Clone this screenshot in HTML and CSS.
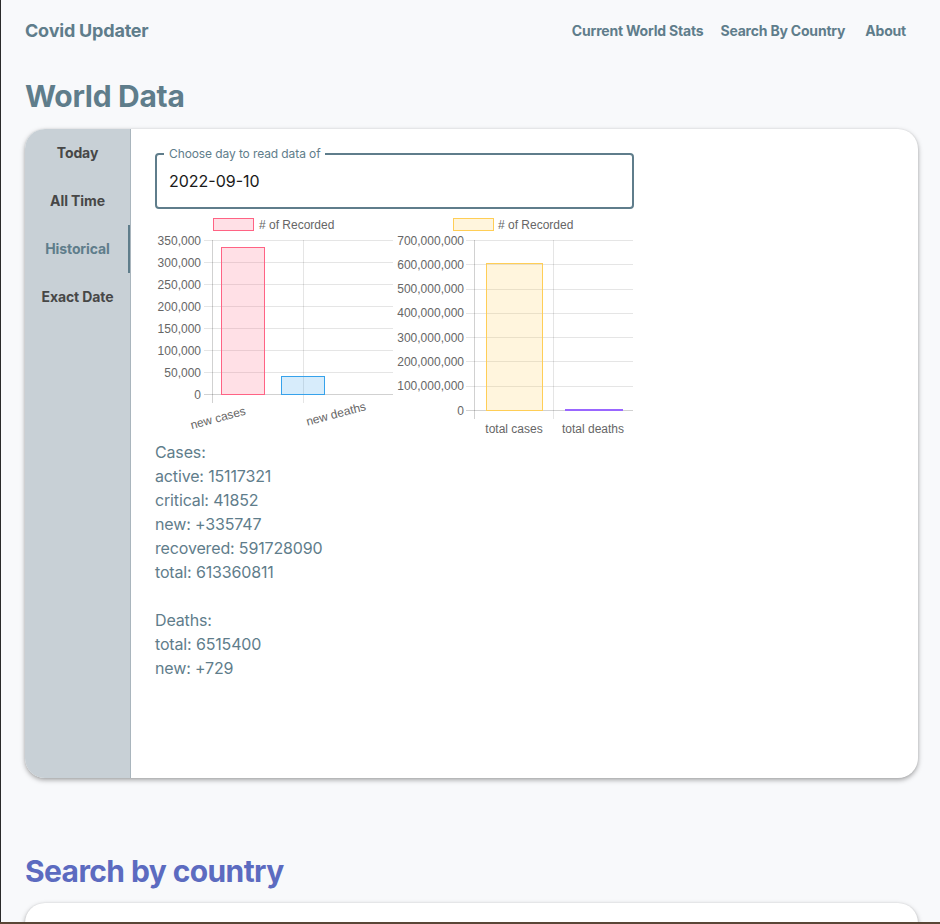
FILE: index.html
```html
<!DOCTYPE html>
<html lang="en">
<head>
<meta charset="utf-8">
<title>Covid Updater</title>
<link rel="stylesheet" href="styles.css">
</head>
<body>
<div class="page">
  <header class="topbar">
    <div class="brand">Covid Updater</div>
    <nav class="nav">
      <a href="#" class="nav-link">Current World Stats</a>
      <a href="#" class="nav-link">Search By Country</a>
      <a href="#" class="nav-link">About</a>
    </nav>
  </header>

  <h1 class="section-title">World Data</h1>

  <section class="card">
    <aside class="tabs">
      <div class="tab">Today</div>
      <div class="tab">All Time</div>
      <div class="tab active">Historical</div>
      <div class="tab">Exact Date</div>
    </aside>
    <div class="panel">
      <div class="field">
        <span class="field-label">Choose day to read data of</span>
        <div class="field-value">2022-09-10</div>
      </div>

      <div class="charts">
        <svg class="chart" width="238" height="225" viewBox="0 0 238 225">
          <rect x="58.5" y="3.5" width="40" height="12" fill="rgba(255,99,132,0.2)" stroke="rgb(255,99,132)" stroke-width="1"/>
          <text x="104" y="13.5" class="legend-text">&#35; of Recorded</text>
          <g class="grid">
            <line x1="49" y1="25.5" x2="238" y2="25.5"/>
            <line x1="49" y1="47.5" x2="238" y2="47.5"/>
            <line x1="49" y1="69.5" x2="238" y2="69.5"/>
            <line x1="49" y1="91.5" x2="238" y2="91.5"/>
            <line x1="49" y1="113.5" x2="238" y2="113.5"/>
            <line x1="49" y1="135.5" x2="238" y2="135.5"/>
            <line x1="49" y1="157.5" x2="238" y2="157.5"/>
            <line x1="148.5" y1="25" x2="148.5" y2="188"/>
          </g>
          <g class="axis">
            <line x1="49" y1="179.5" x2="238" y2="179.5"/>
            <line x1="57.5" y1="25" x2="57.5" y2="188"/>
          </g>
          <g class="ticks" text-anchor="end">
            <text x="46" y="29.5">350,000</text>
            <text x="46" y="51.5">300,000</text>
            <text x="46" y="73.5">250,000</text>
            <text x="46" y="95.5">200,000</text>
            <text x="46" y="117.5">150,000</text>
            <text x="46" y="139.5">100,000</text>
            <text x="46" y="161.5">50,000</text>
            <text x="46" y="183.5">0</text>
          </g>
          <rect x="66.5" y="32.5" width="43" height="147" fill="rgba(255,99,132,0.2)" stroke="rgb(255,99,132)" stroke-width="1"/>
          <rect x="126.5" y="161.5" width="43" height="18" fill="rgba(54,162,235,0.2)" stroke="rgb(54,162,235)" stroke-width="1"/>
          <g class="ticks" text-anchor="middle">
            <text x="63" y="207" transform="rotate(-15 63 203)">new cases</text>
            <text x="181" y="203" transform="rotate(-15 181 199)">new deaths</text>
          </g>
        </svg>

        <svg class="chart" width="238" height="225" viewBox="0 0 238 225">
          <rect x="58.5" y="3.5" width="40" height="12" fill="rgba(255,206,86,0.2)" stroke="rgb(255,206,86)" stroke-width="1"/>
          <text x="103" y="13.5" class="legend-text">&#35; of Recorded</text>
          <g class="grid">
            <line x1="71" y1="25.5" x2="238" y2="25.5"/>
            <line x1="71" y1="49.5" x2="238" y2="49.5"/>
            <line x1="71" y1="74.5" x2="238" y2="74.5"/>
            <line x1="71" y1="98.5" x2="238" y2="98.5"/>
            <line x1="71" y1="122.5" x2="238" y2="122.5"/>
            <line x1="71" y1="146.5" x2="238" y2="146.5"/>
            <line x1="71" y1="171.5" x2="238" y2="171.5"/>
            <line x1="158.5" y1="25" x2="158.5" y2="204"/>
          </g>
          <g class="axis">
            <line x1="71" y1="195.5" x2="238" y2="195.5"/>
            <line x1="79.5" y1="25" x2="79.5" y2="204"/>
          </g>
          <g class="ticks" text-anchor="end">
            <text x="69" y="29.5">700,000,000</text>
            <text x="69" y="53.5">600,000,000</text>
            <text x="69" y="78">500,000,000</text>
            <text x="69" y="102">400,000,000</text>
            <text x="69" y="126.5">300,000,000</text>
            <text x="69" y="150.5">200,000,000</text>
            <text x="69" y="175">100,000,000</text>
            <text x="69" y="199.5">0</text>
          </g>
          <rect x="91.5" y="48.5" width="56" height="147" fill="rgba(255,206,86,0.2)" stroke="rgb(255,206,86)" stroke-width="1"/>
          <rect x="170.5" y="194.5" width="57" height="1" fill="rgba(153,102,255,0.2)" stroke="rgb(153,102,255)" stroke-width="1"/>
          <g class="ticks" text-anchor="middle">
            <text x="119" y="218">total cases</text>
            <text x="198" y="218">total deaths</text>
          </g>
        </svg>
      </div>

      <div class="stats">
        <div>Cases:</div>
        <div>active: 15117321</div>
        <div>critical: 41852</div>
        <div>new: +335747</div>
        <div>recovered: 591728090</div>
        <div>total: 613360811</div>
        <div class="spacer"></div>
        <div>Deaths:</div>
        <div>total: 6515400</div>
        <div>new: +729</div>
      </div>
    </div>
  </section>

  <h2 class="section-title search-title">Search by country</h2>
  <section class="card card-search"></section>
</div>
<div class="window-edge"></div>
</body>
</html>
```

FILE: styles.css
```css
html, body {
  margin: 0;
  padding: 0;
}

body {
  background: #f8f9fb;
  font-family: "Inter", "Open Sans", sans-serif;
  border-left: 1px solid #2a2a2a;
  min-height: 100vh;
}

.page {
  padding: 0 22px 40px 24px;
}

.topbar {
  height: 60px;
  display: flex;
  align-items: center;
  justify-content: space-between;
}

.brand {
  font-size: 18px;
  font-weight: 700;
  color: #5f7d8b;
  letter-spacing: -0.2px;
}

.nav {
  display: flex;
  gap: 17px;
  padding-right: 12px;
}

.nav-link {
  font-size: 14px;
  font-weight: 700;
  color: #5f7d8b;
  text-decoration: none;
  letter-spacing: -0.2px;
}

.nav-link:last-child {
  margin-left: 3px;
}

.section-title {
  margin: 18px 0 0 0;
  height: 51px;
  font-size: 30px;
  line-height: 36px;
  font-weight: 700;
  color: #5f7d8b;
  letter-spacing: -0.3px;
}

.card {
  display: flex;
  background: #fff;
  border-radius: 20px;
  box-shadow: 0 2px 5px rgba(0, 0, 0, 0.35), 0 0 2px rgba(0, 0, 0, 0.08);
  overflow: hidden;
  height: 649px;
}

.tabs {
  width: 105px;
  flex: none;
  background: #c8d0d6;
  border-right: 1px solid #a9b5bd;
  display: flex;
  flex-direction: column;
}

.tab {
  height: 48px;
  display: flex;
  align-items: center;
  justify-content: center;
  font-size: 14px;
  font-weight: 700;
  color: #474747;
  letter-spacing: -0.1px;
  padding-bottom: 1px;
  box-sizing: border-box;
}

.tab.active {
  color: #5f7d8b;
  box-shadow: inset -2px 0 0 #5f7d8b;
}

.panel {
  flex: 1;
  padding: 24px 24px 0 24px;
}

.field {
  position: relative;
  width: 479px;
  height: 56px;
  box-sizing: border-box;
  border: 2px solid #5f7d8b;
  border-radius: 4px;
}

.field-label {
  position: absolute;
  top: -9px;
  left: 7px;
  padding: 0 5px;
  background: #fff;
  font-size: 12px;
  line-height: 16px;
  color: #5f7d8b;
  letter-spacing: -0.1px;
}

.field-value {
  padding: 0 12px;
  line-height: 52px;
  font-size: 16px;
  color: #1a1a1a;
}

.charts {
  display: flex;
  gap: 2px;
  margin-top: 6px;
  height: 225px;
}

.chart {
  display: block;
  overflow: visible;
}

.chart text {
  font-family: "Liberation Sans", Arial, sans-serif;
  font-size: 12px;
  fill: #666;
}

.grid line {
  stroke: rgba(0, 0, 0, 0.1);
  stroke-width: 1;
}

.axis line {
  stroke: rgba(0, 0, 0, 0.18);
  stroke-width: 1;
}

.stats {
  font-size: 16px;
  line-height: 24px;
  color: #5f7d8b;
  letter-spacing: -0.15px;
}

.spacer {
  height: 24px;
}

.search-title {
  margin-top: 75px;
  height: 50px;
  color: #5c6bc0;
  letter-spacing: -0.6px;
}

.card-search {
  height: 200px;
}

.window-edge {
  position: fixed;
  left: 0;
  right: 0;
  bottom: 0;
  height: 2px;
  background: #5a4636;
}
```
